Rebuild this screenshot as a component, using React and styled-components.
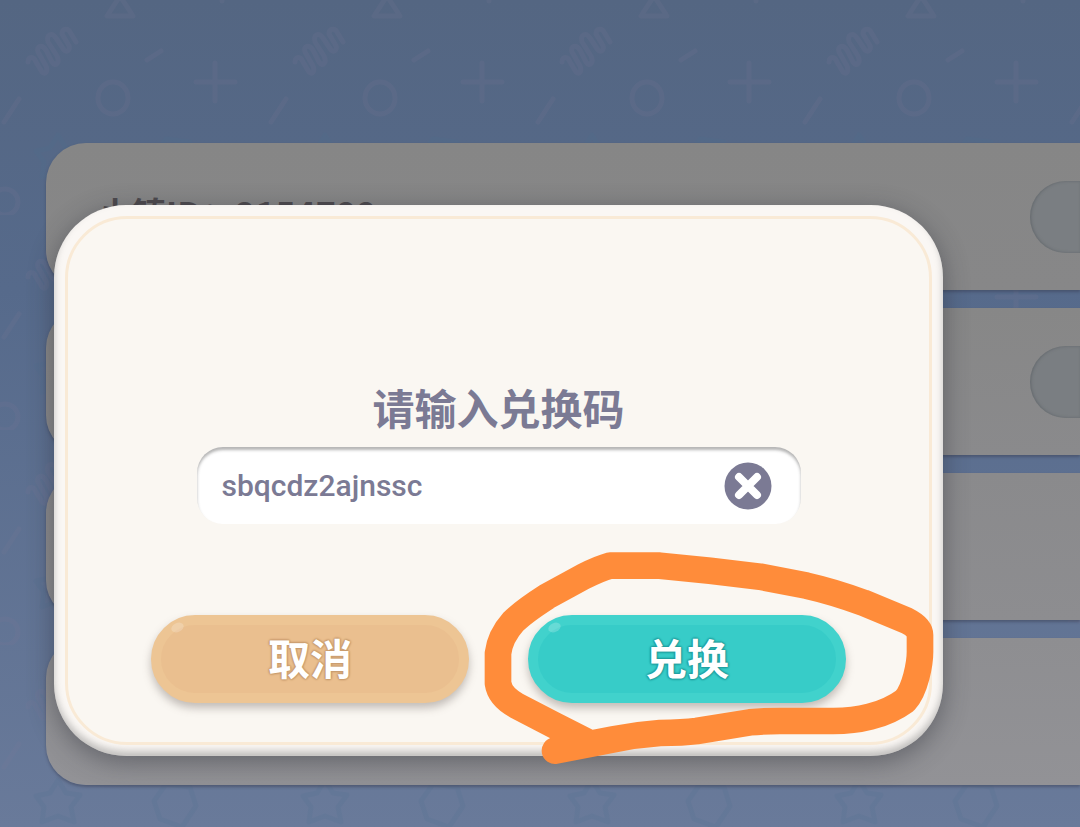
import React, { useState } from 'react';
import styled, { createGlobalStyle } from 'styled-components';

const GlobalStyle = createGlobalStyle`
    * {
        box-sizing: border-box;
    }

    body {
        margin: 0;
        font-family: 'Noto Sans CJK SC', 'Noto Sans', sans-serif;
    }
`;

const Page = styled.main`
    position: relative;
    min-height: 100vh;
    padding: 143px 0 40px 46px;
    overflow: hidden;
    background: linear-gradient(#546682, #566a8b 35%, #697a9a);
`;

const Backdrop = styled.svg`
    position: absolute;
    inset: 0;
    width: 100%;
    height: 100%;
    fill: none;
    stroke-width: 5;
    stroke-linecap: round;
    stroke-linejoin: round;
    opacity: 0.15;

    .bars {
        stroke: #7f7a98;
    }

    .stars {
        stroke: #4d7090;
    }
`;

const SettingList = styled.ul`
    position: relative;
    display: flex;
    flex-direction: column;
    gap: 18px;
    margin: 0;
    padding: 0;
    list-style: none;
`;

const SettingRow = styled.li`
    display: flex;
    align-items: center;
    justify-content: space-between;
    height: 147px;
    padding-left: 52px;
    border-radius: 40px 0 0 40px;
    background: ${(props) => props.$color};
    box-shadow: 0 2px 3px rgba(60, 66, 88, 0.55);
`;

const SettingLabel = styled.span`
    padding-bottom: 8px;
    font-size: 34px;
    font-weight: 700;
    line-height: 48px;
    color: #4d4a4e;
`;

const SettingButton = styled.button`
    width: 50px;
    height: 72px;
    border: none;
    border-radius: 36px 0 0 36px;
    background: #7a7e82;
    box-shadow: inset 1px 0 3px rgba(90, 96, 100, 0.7);
`;

const Overlay = styled.div`
    position: absolute;
    inset: 0;
    padding: 205px 137px 0 54px;
`;

const Dialog = styled.section`
    padding: 11px;
    border-radius: 72px;
    background: #faf7f4;
    box-shadow:
        inset 0 -5px 7px rgba(110, 110, 110, 0.4),
        0 6px 26px rgba(40, 42, 52, 0.45);
`;

const DialogFrame = styled.form`
    display: flex;
    flex-direction: column;
    align-items: center;
    height: 529px;
    padding: 160px 83px 39px;
    border: 3px solid #f9ead6;
    border-radius: 62px;
    background: #faf7f2;
`;

const Title = styled.label`
    font-size: 42px;
    font-weight: 700;
    line-height: 56px;
    color: #7b7a94;
`;

const CodeField = styled.div`
    display: flex;
    align-items: center;
    width: 604px;
    max-width: 100%;
    height: 77px;
    margin-top: 12px;
    padding: 0 29px 0 25px;
    border-radius: 26px;
    background: #ffffff;
    box-shadow: inset 0 3px 3px rgba(90, 90, 90, 0.45);
`;

const CodeInput = styled.input`
    flex: 1;
    min-width: 0;
    padding: 0;
    border: none;
    outline: none;
    background: transparent;
    font-family: Roboto, 'Noto Sans CJK SC', sans-serif;
    font-size: 30px;
    font-weight: 500;
    line-height: 40px;
    color: #7b7a94;
`;

const ClearButton = styled.button`
    display: flex;
    padding: 0;
    border: none;
    border-radius: 50%;
    background: transparent;
`;

const Actions = styled.div`
    display: flex;
    justify-content: space-between;
    gap: 24px;
    width: 100%;
    margin-top: auto;
`;

const ActionItem = styled.div`
    position: relative;
    width: 318px;
`;

const ActionButton = styled.button`
    position: relative;
    width: 100%;
    height: 88px;
    padding: 0 0 4px;
    border: 10px solid ${(props) => props.$edge};
    border-radius: 44px;
    background: ${(props) => props.$color};
    box-shadow: 0 5px 8px rgba(110, 100, 95, 0.4);
    font-family: inherit;
    font-size: 42px;
    font-weight: 700;
    line-height: 60px;
    color: #ffffff;
    text-shadow:
        0 1px 2px ${(props) => props.$shade},
        0 -1px 2px ${(props) => props.$shade},
        1px 0 2px ${(props) => props.$shade},
        -1px 0 2px ${(props) => props.$shade};

    &::before {
        content: '';
        position: absolute;
        top: -2px;
        left: 10px;
        width: 13px;
        height: 9px;
        border-radius: 50%;
        background: rgba(255, 255, 255, 0.2);
        transform: rotate(-25deg);
    }
`;

const Scribble = styled.svg`
    position: absolute;
    top: -75px;
    left: -58px;
    width: 480px;
    height: 240px;
    fill: none;
    stroke: #ff8c3a;
    stroke-width: 80;
    stroke-linecap: round;
    stroke-linejoin: round;
    pointer-events: none;
`;

const rows = [
    { id: 1, label: '小镇ID：2154788', color: 'linear-gradient(#868686, #878788)', button: true },
    { id: 2, color: 'linear-gradient(#878787, #8a8a8c)', button: true },
    { id: 3, color: 'linear-gradient(#8a8a8c, #8d8d90)' },
    { id: 4, color: 'linear-gradient(#8e8e91, #929296)' },
];

function PatternBackdrop() {
    return (
        <Backdrop aria-hidden='true'>
            <defs>
                <pattern id='doodles' width='267' height='215' patternUnits='userSpaceOnUse'>
                    <g className='bars'>
                        <path d='M120 -4 L107 16 H133 Z M120 211 L107 231 H133 Z' />
                        <path d='M28 62 C28 56 34 56 36 62 L42 72 C46 76 48 70 46 66 L38 52 C36 46 42 44 46 50 L52 62 C56 68 60 62 57 56 L48 42 C46 34 52 32 56 38 L64 50 C68 54 71 48 68 44 L62 34 C62 28 68 28 70 32 L76 42' />
                        <path d='M147 60 L161 51 M196 82 H235 M215 63 V101 M4 122 L19 99' />
                        <path d='M222 0 V1' />
                        <ellipse cx='113' cy='98' rx='15' ry='16' />
                        <circle cx='5' cy='202' r='13' />
                    </g>
                    <g className='stars'>
                        <path d='M58 135 L66 148 L80 150 L71 162 L74 177 L58 171 L42 177 L44 162 L36 151 L50 148 Z' />
                        <path d='M166 139 L190 142 L196 161 L182 182 L160 174 L154 156 Z' />
                    </g>
                </pattern>
            </defs>
            <rect width='100%' height='100%' fill='url(#doodles)' stroke='none' />
        </Backdrop>
    );
}

function App() {
    const [code, setCode] = useState('sbqcdz2ajnssc');

    return (
        <Page>
            <GlobalStyle />
            <PatternBackdrop />
            <SettingList>
                {rows.map((row) => (
                    <SettingRow key={row.id} $color={row.color}>
                        <SettingLabel>{row.label}</SettingLabel>
                        {row.button && <SettingButton type='button' aria-label='设置' />}
                    </SettingRow>
                ))}
            </SettingList>

            <Overlay>
                <Dialog role='dialog' aria-labelledby='code-title'>
                    <DialogFrame onSubmit={(event) => event.preventDefault()}>
                        <Title id='code-title' htmlFor='code'>请输入兑换码</Title>
                        <CodeField>
                            <CodeInput
                                id='code'
                                type='text'
                                spellCheck={false}
                                value={code}
                                onChange={(event) => {
                                    setCode(event.target.value);
                                }}
                            />
                            <ClearButton type='button' aria-label='清除' onClick={() => setCode('')}>
                                <svg width='48' height='48' viewBox='0 0 48 48'>
                                    <circle cx='24' cy='24' r='23.5' fill='#7b7a94' />
                                    <path d='M15 15 L33 33 M33 15 L15 33' stroke='#ffffff' strokeWidth='8' strokeLinecap='round' />
                                </svg>
                            </ClearButton>
                        </CodeField>
                        <Actions>
                            <ActionItem>
                                <ActionButton type='button' $color='#eabf8f' $edge='#edc594' $shade='#c79a6c'>
                                    取消
                                </ActionButton>
                            </ActionItem>
                            <ActionItem>
                                <ActionButton type='submit' $color='#37ccc8' $edge='#41d2cc' $shade='#1f9c9c'>
                                    兑换
                                </ActionButton>
                                <Scribble viewBox='0 0 1440 720' aria-hidden='true'>
                                    <path d='M255 632 L430 598 Q500 584 570 579 Q640 578 680 573 L840 547 Q880 543 930 543 H1090 Q1150 543 1200 530 Q1260 515 1305 482 C1335 450 1351 370 1350 330 V285 Q1350 262 1310 242 L1180 188 Q1090 155 1010 137 L870 110 L720 92 L570 77 H420 Q390 85 340 110 L230 170 Q160 215 130 245 Q90 290 84 340 V430 Q90 470 140 497 L255 557 L350 605' />
                                </Scribble>
                            </ActionItem>
                        </Actions>
                    </DialogFrame>
                </Dialog>
            </Overlay>
        </Page>
    );
}

export default App;
